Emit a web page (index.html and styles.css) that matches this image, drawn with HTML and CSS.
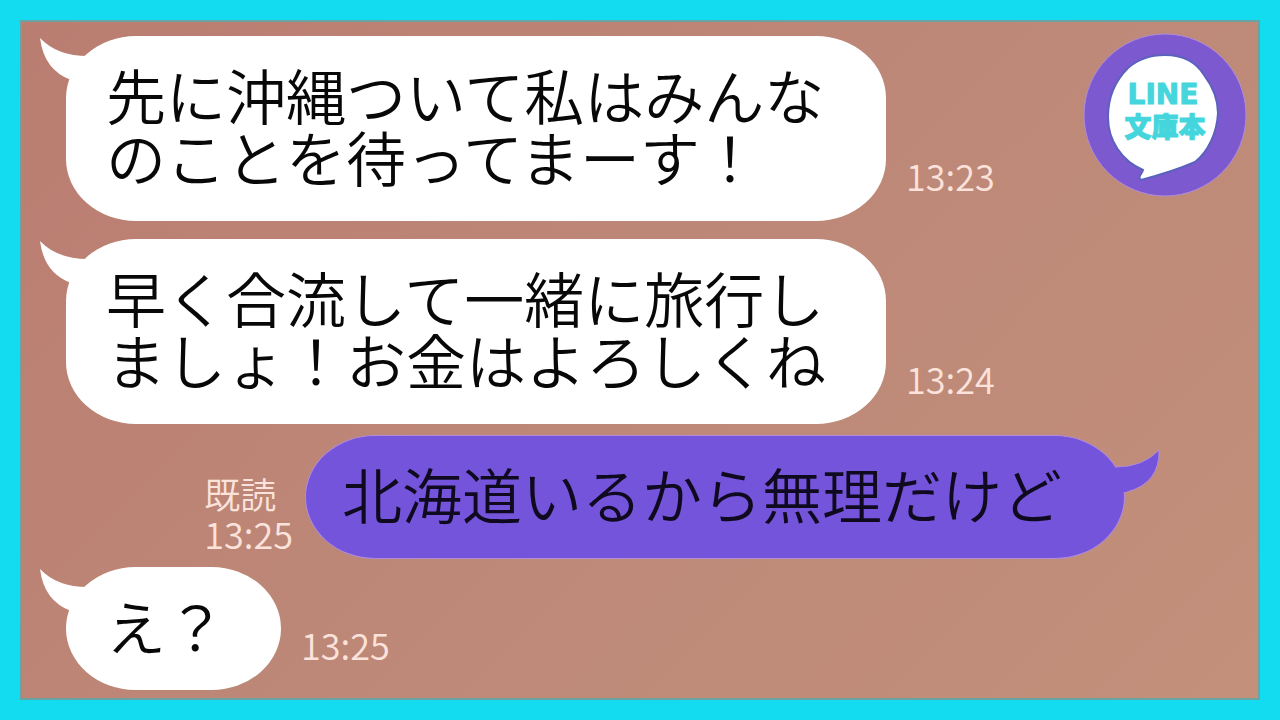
FILE: index.html
```html
<!DOCTYPE html>
<html lang="ja">
<head>
<meta charset="UTF-8">
<meta name="viewport" content="width=device-width, initial-scale=1.0">
<title>LINE文庫本</title>
<link rel="stylesheet" href="styles.css">
</head>
<body>

<main class="chat">

    <div class="message">
        <div class="bubble wide">
            <svg class="tail" viewBox="0 0 60 50"><path d="M0 0 Q17 18 48 18 L60 42 L31 42 Q4 32 0 0Z"/></svg>
            <p>先に沖縄ついて私はみんな<br>のことを待ってまーす！</p>
        </div>
        <div class="info"><time>13:23</time></div>
    </div>

    <div class="message">
        <div class="bubble wide">
            <svg class="tail" viewBox="0 0 60 50"><path d="M0 0 Q17 18 48 18 L60 42 L31 42 Q4 32 0 0Z"/></svg>
            <p>早く合流して一緒に旅行し<br>ましょ！お金はよろしくね</p>
        </div>
        <div class="info"><time>13:24</time></div>
    </div>

    <div class="message mine">
        <div class="info"><span>既読</span><time>13:25</time></div>
        <div class="bubble wide">
            <svg class="tail" viewBox="0 0 60 50"><path d="M16 18 Q43 18 59 1 Q60 34 27 43 L10 43Z"/><path class="edge" d="M16 18 Q43 18 59 1 Q60 34 27 43"/></svg>
            <p>北海道いるから無理だけど</p>
        </div>
    </div>

    <div class="message">
        <div class="bubble">
            <svg class="tail" viewBox="0 0 60 50"><path d="M0 0 Q17 18 48 18 L60 42 L31 42 Q4 32 0 0Z"/></svg>
            <p>え？</p>
        </div>
        <div class="info"><time>13:25</time></div>
    </div>

    <svg class="logo" viewBox="0 0 164 164" role="img" aria-label="LINE文庫本">
        <circle class="logo-back" cx="82" cy="82" r="81"/>
        <path class="logo-balloon" d="M82 22 C100 22 113 29 121 42 C130 54 135 66 135 80 C134 100 125 119 112 129 C96 136 77 142 58 147 C54 144 59 141 60 137 C39 128 25 108 25 84 C25 64 33 47 45 35 C55 26 66 22 82 22Z"/>
        <text class="logo-en" x="80" y="71">LINE</text>
        <text class="logo-ja" x="82" y="104">文庫本</text>
    </svg>

</main>

</body>
</html>
```
FILE: styles.css
```css
* {
  box-sizing: border-box;
}

body {
  margin: 0;
  min-height: 100vh;
  display: flex;
  background-color: #13dcf1;
  padding: 20px;
  font-family: "Noto Sans CJK JP", sans-serif;
  font-weight: 350;
}

.chat {
  position: relative;
  flex: 1;
  padding: 14px 44px 6px;
  border: 2px solid #6ba3a0;
  background: linear-gradient(135deg, #ba7d71 0%, #bd8777 45%, #c2907b 100%);
}

.message {
  display: flex;
  align-items: flex-end;
  gap: 20px;
  margin-bottom: 18px;
}

.message:last-of-type {
  margin-bottom: 0;
}

.bubble {
  position: relative;
  padding: 27px 55px 34px 40px;
  border-radius: 70px / 62px;
  background-color: #fff;
  color: #080808;
}

.wide {
  width: 820px;
}

.bubble p {
  margin: 0;
  font-size: 60px;
  line-height: 62px;
  white-space: nowrap;
}

.tail {
  position: absolute;
  top: 2px;
  left: -26px;
  width: 60px;
  height: 50px;
  fill: #fff;
}

.info {
  display: flex;
  flex-direction: column;
  margin-bottom: 26px;
  color: #fbe3dc;
  font-size: 36px;
  line-height: 40px;
}

/* own messages */
.mine {
  justify-content: flex-end;
  gap: 12px;
  margin: -7px 89px 8px 0;
}

.mine .info {
  margin-bottom: 6px;
}

.mine .bubble {
  background-color: #7454da;
  border: 1px solid #b18bdc;
  color: #100a20;
  padding: 26px 36px 34px;
}

.mine .tail {
  top: 13px;
  left: auto;
  right: -36px;
  fill: #7454da;
}

.edge {
  fill: none;
  stroke: #b18bdc;
}

.logo {
  position: absolute;
  top: 11px;
  right: 11px;
  width: 164px;
  height: 164px;
}

.logo-back {
  fill: #7d59d0;
  stroke: #b18bdc;
}

.logo-balloon {
  fill: #fff;
  stroke: #5b62bd;
  stroke-width: 2px;
}

.logo text {
  fill: #45d5dc;
  stroke: #45d5dc;
  stroke-width: 1px;
  stroke-linejoin: round;
  text-anchor: middle;
  font-weight: 900;
}

.logo-en {
  font-family: "DejaVu Sans", sans-serif;
  font-size: 28px;
}

.logo-ja {
  font-size: 27px;
}
```
